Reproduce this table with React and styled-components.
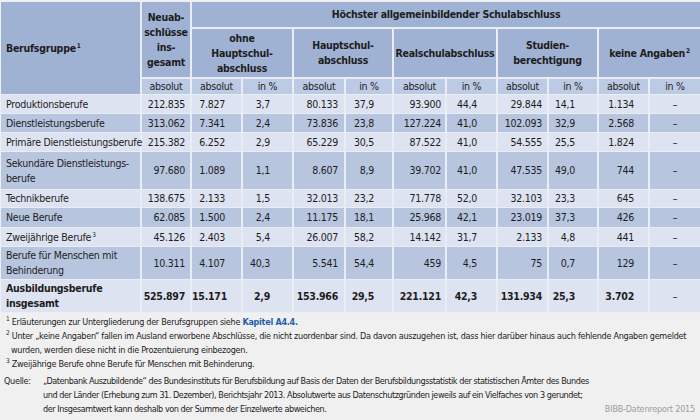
import styled, { createGlobalStyle } from "styled-components";

const GlobalStyle = createGlobalStyle`
  body {
    margin: 0;
    background: #f0f0f0;
    font-family: "DejaVu Sans Condensed", "Liberation Sans Narrow", "Liberation Sans", sans-serif;
    color: #1d1d1d;
  }
`;

const cols = [140, 50, 51, 51, 52, 48, 53, 51, 51, 50, 51, 51];
const pads = [0, 5, 16, 22, 6, 18, 4, 19, 5, 22, 14, 0];

const rows = [
  { name: "Produktionsberufe", v: ["212.835", "7.827", "3,7", "80.133", "37,9", "93.900", "44,4", "29.844", "14,1", "1.134"] },
  { name: "Dienstleistungsberufe", v: ["313.062", "7.341", "2,4", "73.836", "23,8", "127.224", "41,0", "102.093", "32,9", "2.568"] },
  { name: "Primäre Dienstleistungsberufe", v: ["215.382", "6.252", "2,9", "65.229", "30,5", "87.522", "41,0", "54.555", "25,5", "1.824"] },
  { name: <>Sekundäre Dienstleistungs-<br />berufe</>, h: 37, v: ["97.680", "1.089", "1,1", "8.607", "8,9", "39.702", "41,0", "47.535", "49,0", "744"] },
  { name: "Technikberufe", h: 17, v: ["138.675", "2.133", "1,5", "32.013", "23,2", "71.778", "52,0", "32.103", "23,3", "645"] },
  { name: "Neue Berufe", h: 19, v: ["62.085", "1.500", "2,4", "11.175", "18,1", "25.968", "42,1", "23.019", "37,3", "426"] },
  { name: <>Zweijährige Berufe<Sup>3</Sup></>, v: ["45.126", "2.403", "5,4", "26.007", "58,2", "14.142", "31,7", "2.133", "4,8", "441"] },
  { name: <>Berufe für Menschen mit<br />Behinderung</>, h: 32, v: ["10.311", "4.107", "40,3", "5.541", "54,4", "459", "4,5", "75", "0,7", "129"] },
];

const total = { name: <>Ausbildungsberufe<br />insgesamt</>, h: 32, v: ["525.897", "15.171", "2,9", "153.966", "29,5", "221.121", "42,3", "131.934", "25,3", "3.702"] };

function Sup({ children }) {
  return <SupText>{children}</SupText>;
}

const App = () => {
  const renderRow = (row, i, bold) => (
    <tr key={i}>
      <Label $dark={i % 2 === 1} $h={row.h || 18} $bold={bold}>
        {row.name}
      </Label>
      {row.v.map((val, j) => (
        <Num key={j} $dark={i % 2 === 1} $pad={pads[j + 1]} $bold={bold}>
          {val}
        </Num>
      ))}
      <Dash $dark={i % 2 === 1}>–</Dash>
    </tr>
  );

  return (
    <>
      <GlobalStyle />
      <Page>
        <Table>
          <colgroup>
            {cols.map((w, i) => (
              <col key={i} style={{ width: w }} />
            ))}
          </colgroup>
          <thead>
            <tr>
              <HeadLeft rowSpan={3}>
                Berufsgruppe<Sup>1</Sup>
              </HeadLeft>
              <Head rowSpan={2}>
                Neuab-<br />schlüsse<br />ins-<br />gesamt
              </Head>
              <Head colSpan={10} $h={25}>
                Höchster allgemeinbildender Schulabschluss
              </Head>
            </tr>
            <tr>
              <Head colSpan={2} $h={48}>
                ohne<br />Hauptschul-<br />abschluss
              </Head>
              <Head colSpan={2}>
                Hauptschul-<br />abschluss
              </Head>
              <Head colSpan={2}>Realschulabschluss</Head>
              <Head colSpan={2}>
                Studien-<br />berechtigung
              </Head>
              <Head colSpan={2}>
                keine Angaben<Sup>2</Sup>
              </Head>
            </tr>
            <tr>
              {["absolut", "absolut", "in %", "absolut", "in %", "absolut", "in %", "absolut", "in %", "absolut", "in %"].map(
                (t, i) => (
                  <Unit key={i}>{t}</Unit>
                )
              )}
            </tr>
          </thead>
          <tbody>
            {rows.map((r, i) => renderRow(r, i, false))}
            {renderRow(total, 8, true)}
          </tbody>
        </Table>

        <Notes>
          <Note>
            <Sup>1</Sup> Erläuterungen zur Untergliederung der Berufsgruppen siehe <NoteLink>Kapitel A4.4.</NoteLink>
          </Note>
          <Note>
            <Sup>2</Sup> Unter „keine Angaben“ fallen im Ausland erworbene Abschlüsse, die nicht zuordenbar sind. Da davon
            auszugehen ist, dass hier darüber hinaus auch fehlende Angaben gemeldet
            <br />
            wurden, werden diese nicht in die Prozentuierung einbezogen.
          </Note>
          <Note>
            <Sup>3</Sup> Zweijährige Berufe ohne Berufe für Menschen mit Behinderung.
          </Note>
          <SourceRow>
            <SourceLabel>Quelle:</SourceLabel>
            <SourceText>
              „Datenbank Auszubildende“ des Bundesinstituts für Berufsbildung auf Basis der Daten der
              Berufsbildungsstatistik der statistischen Ämter des Bundes
              <br />
              und der Länder (Erhebung zum 31. Dezember), Berichtsjahr 2013. Absolutwerte aus Datenschutzgründen
              jeweils auf ein Vielfaches von 3 gerundet;
              <br />
              der Insgesamtwert kann deshalb von der Summe der Einzelwerte abweichen.
            </SourceText>
            <Credit>BIBB-Datenreport 2015</Credit>
          </SourceRow>
        </Notes>
      </Page>
    </>
  );
};

const Page = styled.div`
  width: 700px;
  height: 420px;
  padding-top: 2px;
  box-sizing: border-box;
  overflow: hidden;
`;

const Table = styled.table`
  width: 699px;
  margin-left: 1px;
  border-collapse: collapse;
  table-layout: fixed;
  font-size: 10.5px;
  letter-spacing: -0.25px;
  line-height: 15px;
`;

const SupText = styled.sup`
  font-size: 6.5px;
  line-height: 0;
  vertical-align: 4px;
  margin-left: 1px;
`;

const cell = `
  padding: 0;
  border-right: 2px solid #e9edf5;
  border-bottom: 1px solid #e9edf5;
  vertical-align: middle;
  white-space: nowrap;
  &:last-child {
    border-right: none;
  }
`;

const Head = styled.th`
  ${cell}
  height: ${(p) => (p.$h ? `${p.$h}px` : "auto")};
  border-bottom-width: 2px;
  background: #a0b2d3;
  font-weight: 700;
  text-align: center;
`;

const HeadLeft = styled(Head)`
  text-align: left;
  padding-left: 5px;
  border-bottom-width: 1px;
`;

const Unit = styled.th`
  ${cell}
  height: 14px;
  background: #bccae3;
  font-weight: 400;
  text-align: center;
`;

const bodyCell = (p) => `
  ${cell}
  background: ${p.$dark ? "#b7c5df" : "#dde3f0"};
  font-weight: ${p.$bold ? 700 : 400};
`;

const Label = styled.td`
  ${bodyCell}
  height: ${(p) => p.$h}px;
  padding-left: 5px;
  line-height: 15px;
`;

const Num = styled.td`
  ${bodyCell}
  text-align: right;
  padding-right: ${(p) => p.$pad}px;
`;

const Dash = styled.td`
  ${bodyCell}
  text-align: center;
`;

const Notes = styled.div`
  padding: 2px 5px 0 4px;
  font-size: 9px;
  letter-spacing: -0.28px;
  line-height: 14px;
  color: #222;
`;

const Note = styled.div`
  padding-left: 7px;
  text-indent: -6px;
  white-space: nowrap;
`;

const NoteLink = styled.span`
  color: #1f5fa8;
  font-weight: 700;
`;

const SourceRow = styled.div`
  display: flex;
  margin-top: 3px;
  white-space: nowrap;
`;

const SourceLabel = styled.div`
  width: 39px;
  flex: none;
`;

const SourceText = styled.div`
  flex: none;
  letter-spacing: -0.44px;
`;

const Credit = styled.div`
  margin-left: auto;
  align-self: flex-end;
  color: #9c9c9c;
  letter-spacing: -0.2px;
`;

export default App;
